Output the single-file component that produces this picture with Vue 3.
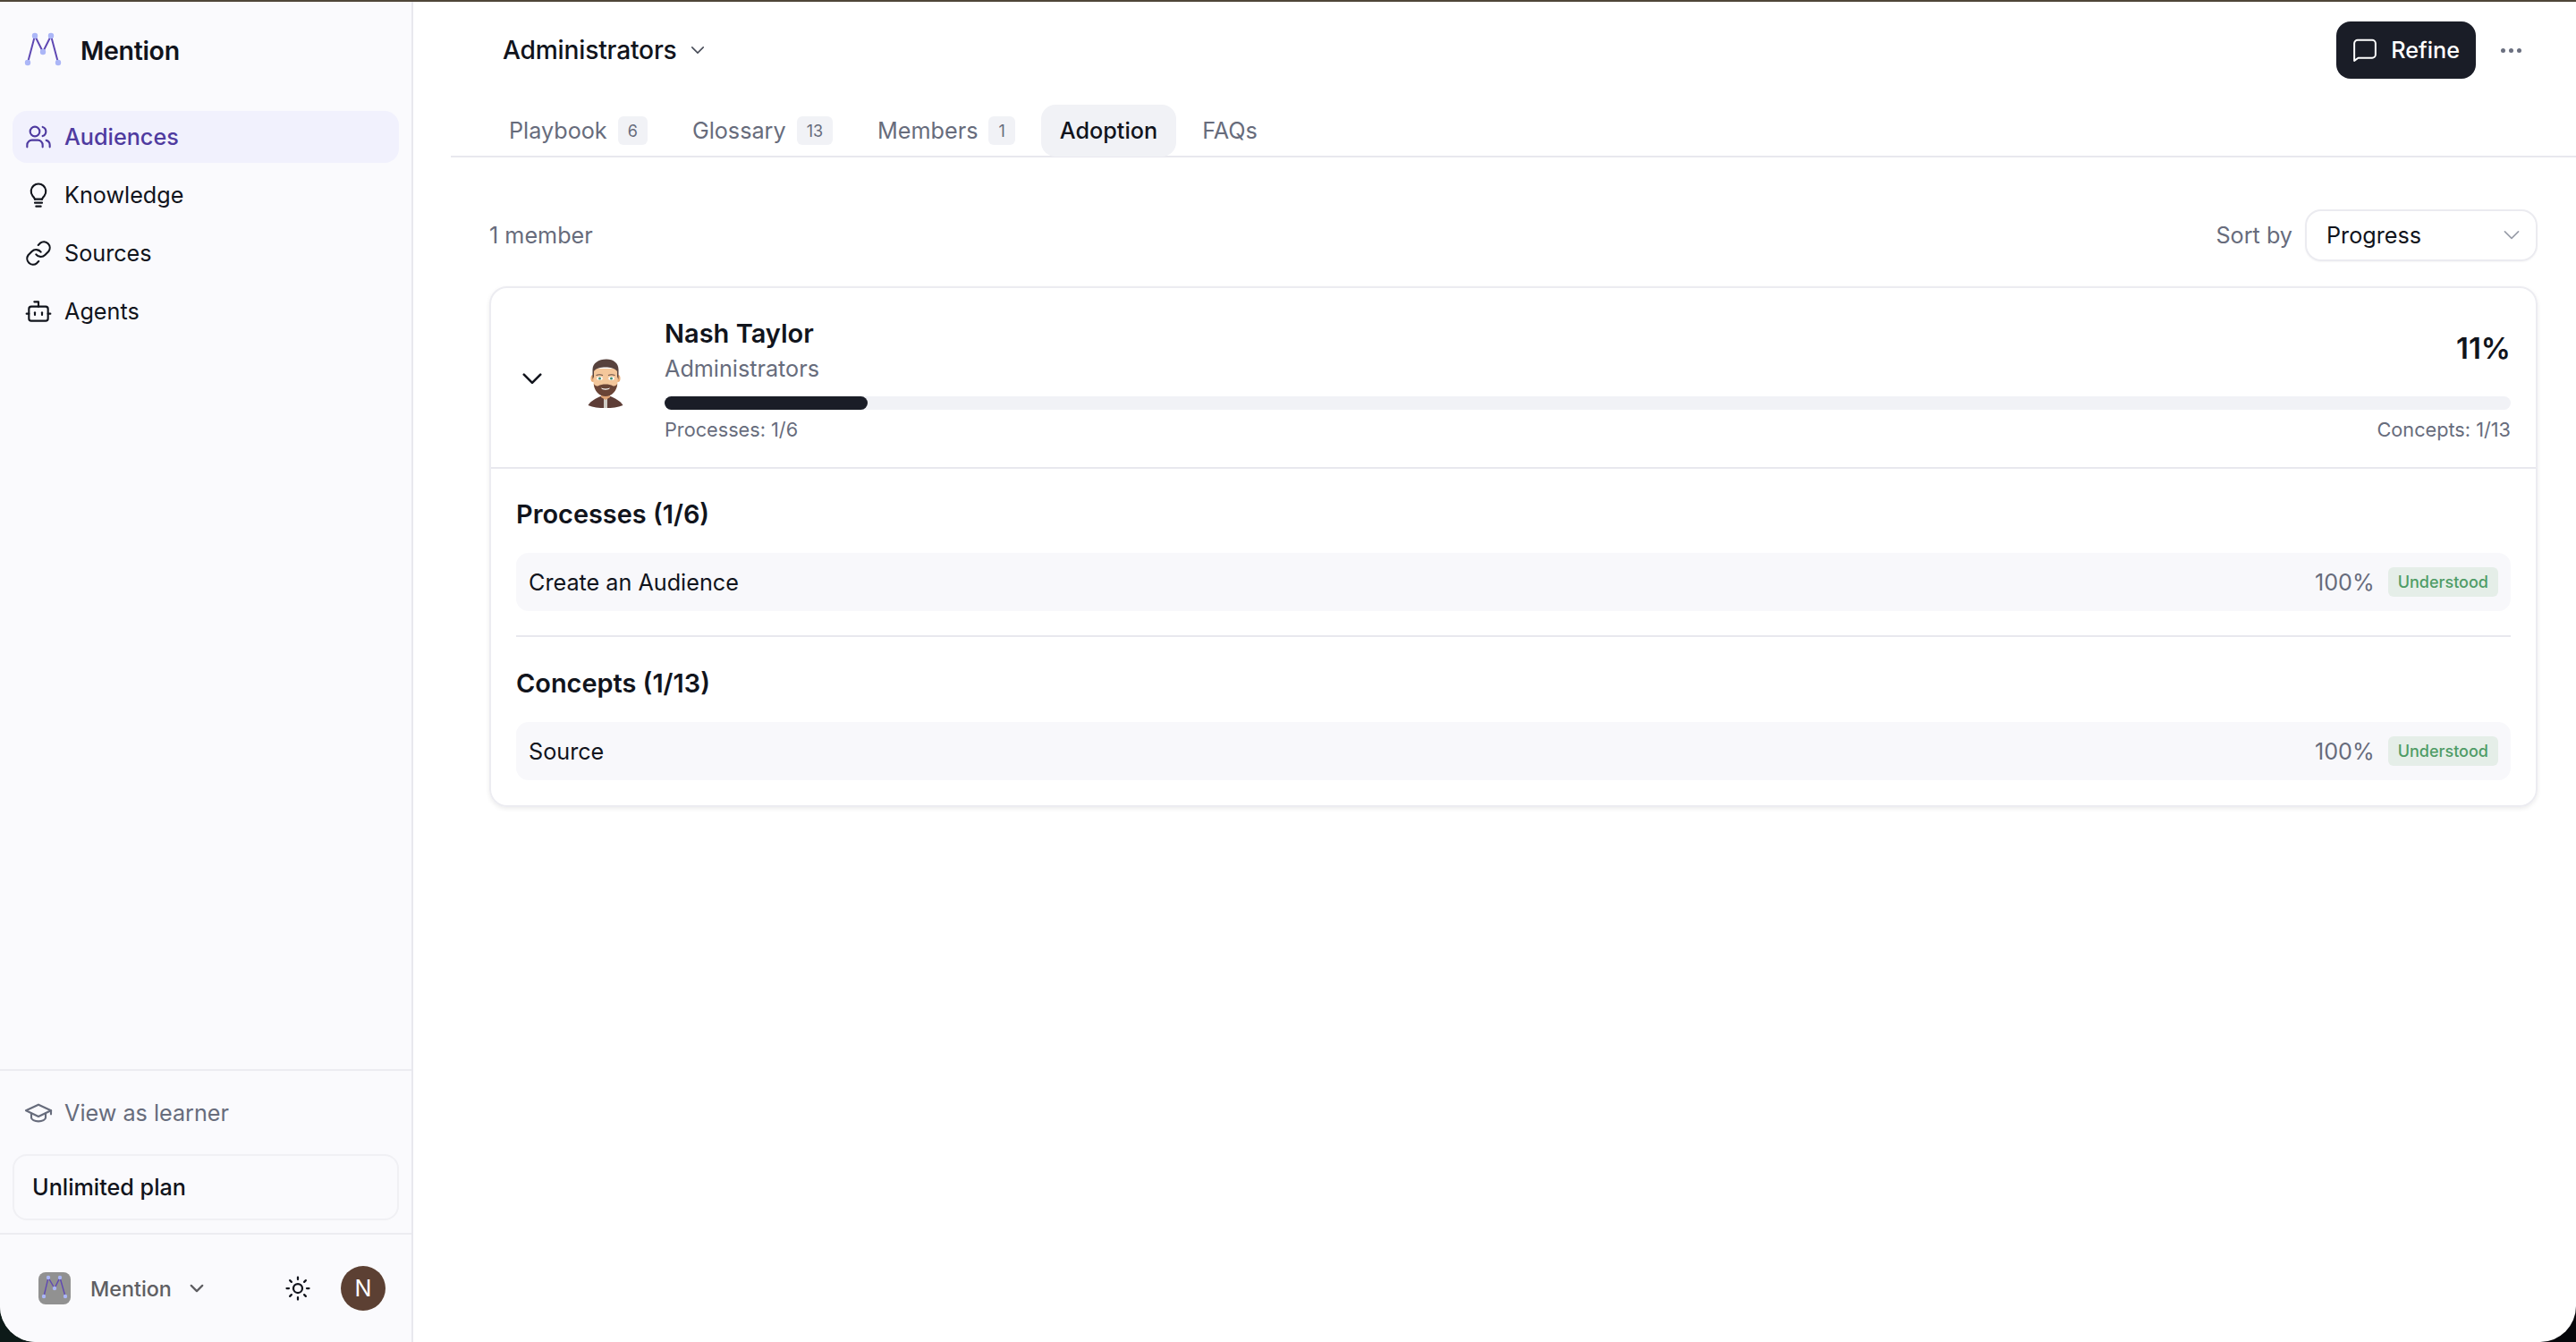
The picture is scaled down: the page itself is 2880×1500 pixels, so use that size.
<template>
  <div class="screen">
    <div class="window">
      <aside class="sidebar">
        <div class="brand">
          <svg class="brand-logo" viewBox="0 0 48 48" width="48" height="48">
            <polyline points="7,38 15,8 24,26 33,8 41,38" fill="none" stroke="#5f48b3" stroke-width="2" />
            <circle v-for="p in logoDots" :key="p[0]" :cx="p[0]" :cy="p[1]" r="3.2" fill="#abb6f7" />
          </svg>
          <span class="brand-name">Mention</span>
        </div>

        <nav class="nav">
          <a v-for="item in navItems" :key="item.label" class="nav-item" :class="{ active: item.active }">
            <svg class="nav-icon" viewBox="0 0 24 24" fill="none" stroke="currentColor" stroke-width="1.6" stroke-linecap="round" stroke-linejoin="round">
              <path v-for="d in item.paths" :key="d" :d="d" />
            </svg>
            {{ item.label }}
          </a>
        </nav>

        <div class="side-footer">
          <a class="learner">
            <svg class="nav-icon" viewBox="0 0 24 24" fill="none" stroke="currentColor" stroke-width="1.6" stroke-linecap="round" stroke-linejoin="round">
              <path d="M12 5 1.5 10 12 15l10.5-5L12 5Z" />
              <path d="M6 12.5V16c0 1.500 2.700 3 6 3s6-1.500 6-3v-3.500" />
              <path d="M22.5 10v3" />
            </svg>
            View as learner
          </a>
          <div class="plan">Unlimited plan</div>
        </div>

        <div class="account">
          <div class="org">
            <span class="org-logo">
              <svg viewBox="0 0 36 36" width="36" height="36">
                <polyline points="6,27 11,6 18,18 24,6 30,27" fill="none" stroke="#5f48b3" stroke-width="1.4" />
                <circle v-for="p in orgDots" :key="p[0]" :cx="p[0]" :cy="p[1]" r="2.2" fill="#abb6f7" />
              </svg>
            </span>
            <span class="org-name">Mention</span>
            <svg class="org-chevron" viewBox="0 0 16 16" fill="none" stroke="currentColor" stroke-width="1.8" stroke-linecap="round" stroke-linejoin="round">
              <path d="m3 5.5 5 5 5-5" />
            </svg>
          </div>
          <svg class="sun" viewBox="0 0 24 24" fill="none" stroke="currentColor" stroke-width="1.8" stroke-linecap="round">
            <circle cx="12" cy="12" r="4" />
            <path d="M12 2v2M12 20v2M2 12h2M20 12h2M4.9 4.9l1.400 1.400M17.700 17.700l1.400 1.400M4.9 19.100l1.400-1.400M17.700 6.300l1.400-1.400" />
          </svg>
          <span class="user-avatar">N</span>
        </div>
      </aside>

      <main class="main">
        <header class="topbar">
          <div class="audience-select">
            Administrators
            <svg viewBox="0 0 16 16" fill="none" stroke="currentColor" stroke-width="1.2" stroke-linecap="round" stroke-linejoin="round">
              <path d="m3 5.5 5 5 5-5" />
            </svg>
          </div>
          <div class="top-actions">
            <button class="refine">
              <svg viewBox="0 0 24 24" fill="none" stroke="currentColor" stroke-width="1.6" stroke-linecap="round" stroke-linejoin="round">
                <path d="M2.5 21.500V6a3 3 0 0 1 3-3h13a3 3 0 0 1 3 3v10a3 3 0 0 1-3 3H6Z" />
              </svg>
              Refine
            </button>
            <div class="more"><i></i><i></i><i></i></div>
          </div>
        </header>

        <div class="tabs">
          <a v-for="tab in tabs" :key="tab.label" class="tab" :class="{ active: tab.active }">
            {{ tab.label }}
            <span v-if="tab.count" class="tab-count">{{ tab.count }}</span>
          </a>
        </div>

        <section class="content">
          <div class="toolbar">
            <span class="member-count">1 member</span>
            <div class="sort">
              <span class="sort-label">Sort by</span>
              <div class="sort-select">
                Progress
                <svg viewBox="0 0 16 16" fill="none" stroke="currentColor" stroke-width="1.2" stroke-linecap="round" stroke-linejoin="round">
                  <path d="m2.5 5 5.5 5.500L13.5 5" />
                </svg>
              </div>
            </div>
          </div>

          <div class="card">
            <div class="member">
              <svg class="member-chevron" viewBox="0 0 20 12" fill="none" stroke="currentColor" stroke-width="2.4" stroke-linecap="round" stroke-linejoin="round">
                <path d="m1.5 1.5 8.500 8.500 8.500-8.500" />
              </svg>
              <svg class="face" viewBox="0 0 40 56">
                <path d="M0.5 53c3-5 9-8 14-10h11c5 2 11 5 14 10-6 2.500-12 3-19.500 3S6 55.500 0.5 53Z" fill="#5d3d36" />
                <rect x="18" y="46" width="4" height="10" fill="#cfcbc3" />
                <path d="M15 36h10v8l-5 3-5-3Z" fill="#dea274" />
                <ellipse cx="6" cy="23" rx="2.5" ry="4" fill="#eaae7a" />
                <ellipse cx="34" cy="23" rx="2.5" ry="4" fill="#eaae7a" />
                <path d="M6.500 12h27v15c0 9-6.500 15-13.500 15S6.500 36 6.500 27Z" fill="#f4c79b" />
                <path d="M6.800 29c1.200 2 2.700 2.500 4.700 2.500 2.500-1.500 5.500-2 8.500-2s6 .5 8.500 2c2 0 3.500-.5 4.700-2.500C32.700 37 27 43 20 43S7.300 37 6.800 29Z" fill="#6a4436" />
                <path d="M15 33.500c3.400 1.200 6.600 1.200 10 0-1 3-9 3-10 0Z" fill="#fff" />
                <path d="M5.500 24V13C5.500 6 12 1.500 21 1.500c8 0 13.500 4.500 13.500 11.500v11l-1.500-3v-6c-3-3.500-7.500-4.500-13-4.500S9.500 11.500 7 15v6Z" fill="#57423d" />
                <ellipse cx="13.500" cy="23" rx="3.300" ry="1.900" fill="#fff" />
                <ellipse cx="26.500" cy="23" rx="3.300" ry="1.900" fill="#fff" />
                <circle cx="13.500" cy="23" r="1.500" fill="#3f8d74" />
                <circle cx="26.500" cy="23" r="1.500" fill="#3f8d74" />
                <path d="M9.500 19.500c2.500-1 5-1 7.500 0M23 19.500c2.500-1 5-1 7.500 0" stroke="#6a4f46" stroke-width="1.2" fill="none" />
              </svg>
              <div class="member-body">
                <div class="member-head">
                  <div>
                    <div class="member-name">Nash Taylor</div>
                    <div class="member-group">Administrators</div>
                  </div>
                  <div class="member-percent">11%</div>
                </div>
                <div class="bar"><div class="bar-fill" :style="{ width: progress + '%' }"></div></div>
                <div class="bar-labels">
                  <span>Processes: 1/6</span>
                  <span>Concepts: 1/13</span>
                </div>
              </div>
            </div>

            <div class="details">
              <div v-for="group in groups" :key="group.title" class="group">
                <h3 class="group-title">{{ group.title }}</h3>
                <div v-for="row in group.rows" :key="row" class="row">
                  <span class="row-name">{{ row }}</span>
                  <span class="row-percent">100%</span>
                  <span class="row-badge">Understood</span>
                </div>
              </div>
            </div>
          </div>
        </section>
      </main>
    </div>
  </div>
</template>

<script setup>
const progress = 11

const logoDots = [[7, 38], [15, 8], [24, 26], [33, 8], [41, 38]]
const orgDots = [[6, 27], [11, 6], [18, 18], [24, 6], [30, 27]]

const navItems = [
  {
    label: 'Audiences',
    active: true,
    paths: [
      'M15.5 20.500v-1.800a4 4 0 0 0-4-4h-5a4 4 0 0 0-4 4v1.800',
      'M9 3.500a4 4 0 1 0 0 8 4 4 0 0 0 0-8Z',
      'M21.500 20.500v-1.800a4 4 0 0 0-3-3.800',
      'M15.5 3.700a4 4 0 0 1 0 7.600'
    ]
  },
  {
    label: 'Knowledge',
    paths: [
      'M9 15.500c-.3-1.200-1-2-2-3a6.200 6.200 0 1 1 10 0c-1 1-1.700 1.800-2 3',
      'M9 15.500h6',
      'M9 18.500h6',
      'M10 21.500h4'
    ]
  },
  {
    label: 'Sources',
    paths: [
      'M10 13a5 5 0 0 0 7.500.5l3-3a5 5 0 0 0-7-7l-1.700 1.700',
      'M14 11a5 5 0 0 0-7.500-.5l-3 3a5 5 0 0 0 7 7l1.700-1.700'
    ]
  },
  {
    label: 'Agents',
    paths: [
      'M12 8V4H8.500',
      'M6 8h12a2 2 0 0 1 2 2v8a2 2 0 0 1-2 2H6a2 2 0 0 1-2-2v-8a2 2 0 0 1 2-2Z',
      'M2 14h2',
      'M20 14h2',
      'M9 13v2',
      'M15 13v2'
    ]
  }
]

const tabs = [
  { label: 'Playbook', count: 6 },
  { label: 'Glossary', count: 13 },
  { label: 'Members', count: 1 },
  { label: 'Adoption', active: true },
  { label: 'FAQs' }
]

const groups = [
  { title: 'Processes (1/6)', rows: ['Create an Audience'] },
  { title: 'Concepts (1/13)', rows: ['Source'] }
]
</script>

<style>
html,
body {
  margin: 0;
  background: #0d1a18;
}
</style>

<style scoped>
.screen {
  width: 2880px;
  height: 1500px;
  overflow: hidden;
  background: linear-gradient(90deg, #0d1a18 50%, #05060a 50%);
  font-family: Inter, "Liberation Sans", sans-serif;
  color: #11141c;
  font-size: 25.2px;
}

.window {
  display: flex;
  height: 1498px;
  border-top: 2px solid #4f4639;
  background: #fff;
  border-radius: 0 0 40px 40px;
  overflow: hidden;
}

/* Sidebar */
.sidebar {
  flex: none;
  box-sizing: border-box;
  width: 462px;
  display: flex;
  flex-direction: column;
  background: #fafafd;
  border-right: 2px solid #e8e8ee;
}

.brand {
  display: flex;
  align-items: center;
  gap: 18px;
  height: 108px;
  padding-left: 24px;
  margin-bottom: 14px;
}

.brand-logo {
  flex: none;
}

.brand-name {
  font-size: 28.5px;
  font-weight: 600;
  letter-spacing: -0.3px;
}

.nav {
  display: flex;
  flex-direction: column;
  gap: 7px;
  padding: 0 14px;
  flex: 1;
}

.nav-item {
  display: flex;
  align-items: center;
  gap: 13px;
  height: 58px;
  padding-left: 13px;
  border-radius: 16px;
}

.nav-item.active {
  background: #f1f1fd;
  color: #4f3ba0;
  font-weight: 500;
}

.nav-icon {
  flex: none;
  width: 32px;
  height: 32px;
}

.side-footer {
  border-top: 2px solid #ececf1;
  padding: 0 14px;
  height: 183px;
  box-sizing: border-box;
}

.learner {
  display: flex;
  align-items: center;
  gap: 13px;
  height: 93px;
  padding-left: 13px;
  color: #676c7c;
}

.plan {
  display: flex;
  align-items: center;
  box-sizing: border-box;
  height: 74px;
  padding-left: 20px;
  border: 2px solid #f0f0f4;
  border-radius: 16px;
  font-weight: 500;
}

.account {
  display: flex;
  align-items: center;
  height: 122px;
  border-top: 2px solid #ececf1;
  box-sizing: border-box;
  padding: 0 14px 0 43px;
}

.org {
  display: flex;
  align-items: center;
  flex: 1;
  color: #5f5f63;
  font-size: 23.3px;
  font-weight: 500;
}

.org-logo {
  display: block;
  width: 36px;
  height: 36px;
  background: #919191;
  border-radius: 8px;
}

.org-name {
  margin-left: 22px;
}

.org-chevron {
  width: 20px;
  height: 20px;
  margin-left: 18px;
}

.sun {
  width: 30px;
  height: 30px;
  margin-right: 33px;
}

.user-avatar {
  display: flex;
  align-items: center;
  justify-content: center;
  width: 50px;
  height: 50px;
  margin-right: 15px;
  border-radius: 50%;
  background: #5c4033;
  color: #fff;
}

/* Main */
.main {
  flex: 1;
  min-width: 0;
}

.topbar {
  display: flex;
  align-items: center;
  justify-content: space-between;
  height: 108px;
  padding: 0 60px 0 100px;
  box-sizing: border-box;
}

.audience-select {
  display: flex;
  align-items: center;
  gap: 13px;
  font-size: 28.2px;
  font-weight: 500;
  letter-spacing: -0.2px;
}

.audience-select svg {
  width: 20px;
  height: 20px;
  color: #444955;
}

.top-actions {
  display: flex;
  align-items: center;
  gap: 28px;
}

.refine {
  display: flex;
  align-items: center;
  gap: 14px;
  height: 64px;
  padding: 0 18px 0 17px;
  border: 0;
  border-radius: 16px;
  background: #1a1d27;
  color: #fff;
  font: 500 25.2px Inter, "Liberation Sans", sans-serif;
}

.refine svg {
  width: 30px;
  height: 30px;
}

.more {
  display: flex;
  gap: 4px;
  width: 24px;
}

.more i {
  width: 5px;
  height: 5px;
  border-radius: 50%;
  background: #6b7080;
}

.tabs {
  display: flex;
  align-items: stretch;
  gap: 8px;
  height: 66px;
  margin-left: 42px;
  padding: 7px 0 0 44px;
  border-bottom: 2px solid #e8e8ee;
  box-sizing: border-box;
  color: #676c7c;
}

.tab {
  display: flex;
  align-items: center;
  gap: 12px;
  padding: 0 21px;
  border-radius: 16px;
  margin-bottom: -1px;
}

.tab.active {
  background: #f1f2f6;
  color: #11141c;
  font-weight: 500;
}

.tab-count {
  display: flex;
  align-items: center;
  justify-content: center;
  min-width: 29px;
  height: 32px;
  padding: 0 11px;
  box-sizing: border-box;
  background: #f1f2f6;
  border-radius: 6px;
  font-size: 18px;
}

.content {
  padding: 0 43px 0 85px;
}

.toolbar {
  display: flex;
  align-items: center;
  justify-content: space-between;
  height: 59px;
  margin-top: 57px;
}

.member-count,
.sort-label {
  color: #676c7c;
}

.sort {
  display: flex;
  align-items: center;
  gap: 14px;
}

.sort-select {
  display: flex;
  align-items: center;
  justify-content: space-between;
  box-sizing: border-box;
  width: 260px;
  height: 58px;
  padding: 0 16px 0 22px;
  border: 2px solid #ebebf0;
  border-radius: 18px;
  box-shadow: 0 1px 2px rgba(0, 0, 0, 0.04);
}

.sort-select svg {
  width: 22px;
  height: 22px;
  color: #9a9ea9;
}

.card {
  margin-top: 28px;
  border: 2px solid #ececf1;
  border-radius: 20px;
  box-shadow: 0 2px 5px rgba(0, 0, 0, 0.08);
}

.member {
  display: flex;
  height: 202px;
  box-sizing: border-box;
  border-bottom: 2px solid #e8e8ee;
  padding-right: 28px;
}

.member-chevron {
  flex: none;
  width: 22px;
  height: 13px;
  margin: 95px 0 0 35px;
}

.face {
  flex: none;
  width: 40px;
  height: 56px;
  margin: 78px 46px 0 51px;
}

.member-body {
  flex: 1;
  padding-top: 26px;
}

.member-head {
  display: flex;
  justify-content: space-between;
  align-items: center;
  height: 88px;
}

.member-name {
  font-size: 29px;
  font-weight: 600;
  line-height: 36px;
}

.member-group {
  margin-top: 3px;
  line-height: 36px;
  color: #676c7c;
}

.member-percent {
  margin-top: -7px;
  font-size: 33px;
  font-weight: 600;
}

.bar {
  margin-top: 7px;
  height: 15px;
  border-radius: 8px;
  background: #f1f2f6;
}

.bar-fill {
  height: 100%;
  border-radius: 8px;
  background: #1a1d27;
}

.bar-labels {
  display: flex;
  justify-content: space-between;
  margin-top: 8px;
  font-size: 21.7px;
  line-height: 28px;
  color: #676c7c;
}

.details {
  padding: 0 28px;
}

.group {
  padding: 33px 0 27px;
}

.group + .group {
  border-top: 2px solid #e8e8ee;
  padding-top: 34px;
  padding-bottom: 28px;
}

.group-title {
  margin: 0;
  font-size: 28.9px;
  font-weight: 600;
  line-height: 36px;
}

.row {
  display: flex;
  align-items: center;
  height: 65px;
  margin-top: 25px;
  padding: 0 14px;
  background: #f8f8fb;
  border-radius: 14px;
}

.row-name {
  flex: 1;
}

.row-percent {
  color: #676c7c;
  margin-right: 15px;
}

.row-badge {
  display: flex;
  align-items: center;
  height: 33px;
  padding: 0 11px;
  border-radius: 6px;
  background: #e5eee8;
  color: #4f9c66;
  font-size: 18px;
  font-weight: 500;
}
</style>
